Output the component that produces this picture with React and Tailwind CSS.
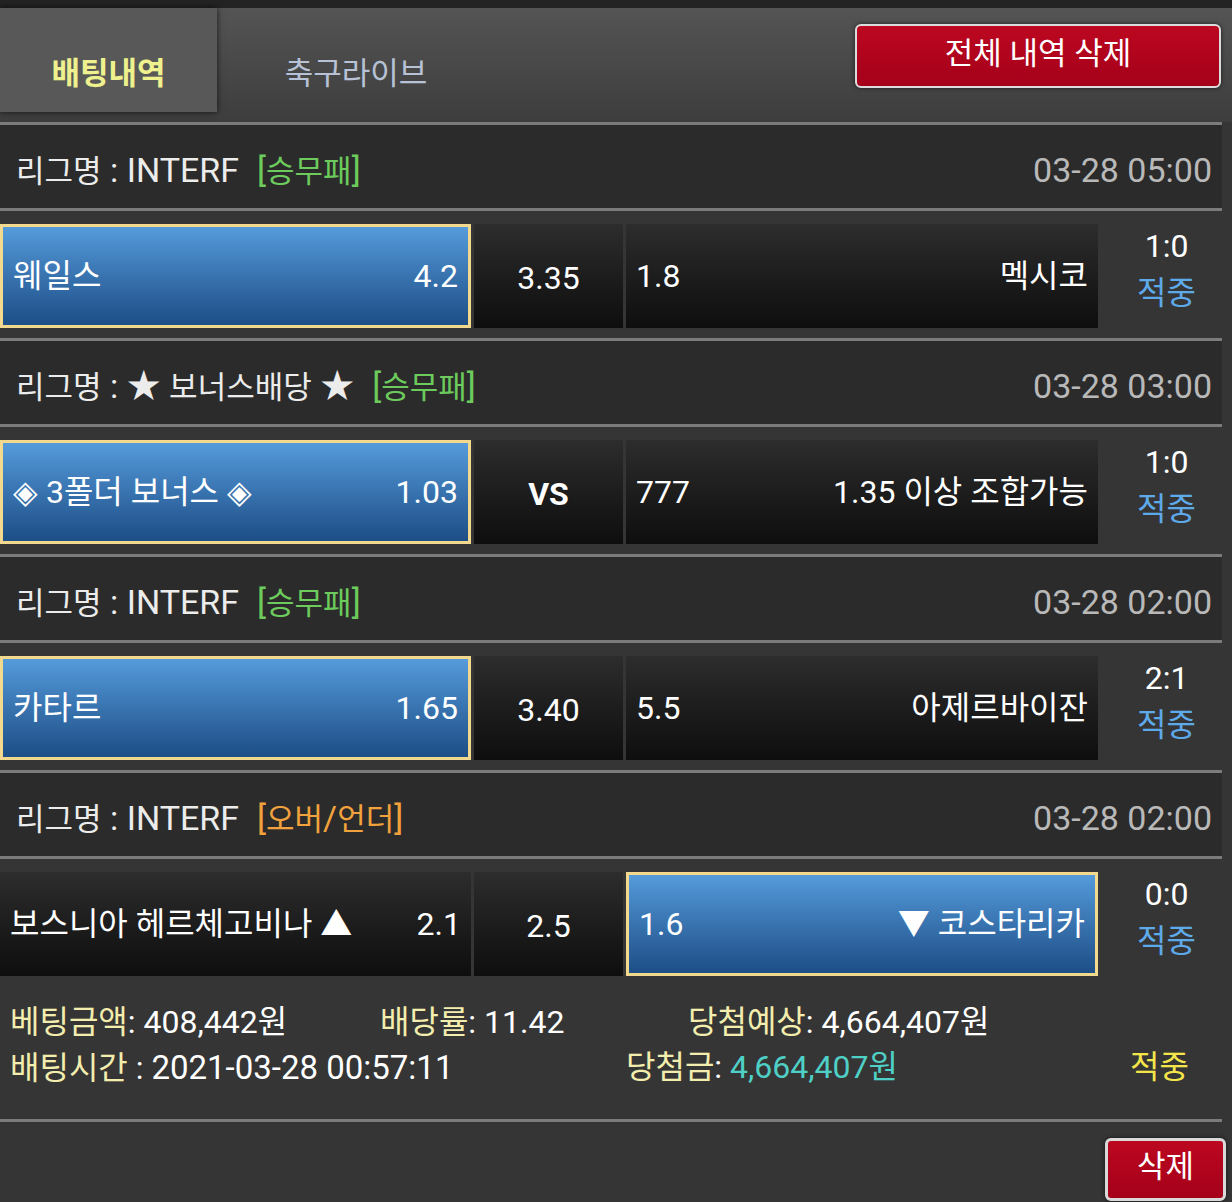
import React from "react";

// Betting history list: four settled picks plus the slip summary.
const ROWS = [
  {
    league: "리그명 : INTERF",
    tag: "[승무패]",
    tagColor: "text-[#6ccb5c]",
    time: "03-28 05:00",
    home: "웨일스",
    homeOdds: "4.2",
    draw: "3.35",
    awayOdds: "1.8",
    away: "멕시코",
    pick: "home",
    score: "1:0",
  },
  {
    league: "리그명 : ★ 보너스배당 ★",
    tag: "[승무패]",
    tagColor: "text-[#6ccb5c]",
    time: "03-28 03:00",
    home: "◈ 3폴더 보너스 ◈",
    homeOdds: "1.03",
    draw: "VS",
    awayOdds: "777",
    away: "1.35 이상 조합가능",
    pick: "home",
    score: "1:0",
  },
  {
    league: "리그명 : INTERF",
    tag: "[승무패]",
    tagColor: "text-[#6ccb5c]",
    time: "03-28 02:00",
    home: "카타르",
    homeOdds: "1.65",
    draw: "3.40",
    awayOdds: "5.5",
    away: "아제르바이잔",
    pick: "home",
    score: "2:1",
  },
  {
    league: "리그명 : INTERF",
    tag: "[오버/언더]",
    tagColor: "text-[#f2a23c]",
    time: "03-28 02:00",
    home: "보스니아 헤르체고비나 ▲",
    homeOdds: "2.1",
    draw: "2.5",
    awayOdds: "1.6",
    away: "▼ 코스타리카",
    pick: "away",
    score: "0:0",
  },
];

const FONT = { fontFamily: 'Roboto, "Noto Sans CJK KR", sans-serif' };

const blue = "bg-gradient-to-b from-[#559bdb] to-[#1d4e86] border-[3px] border-[#f3d98e]";
const dark = "bg-gradient-to-b from-[#2d2d2d] to-[#0e0e0e]";

function Mixed({ text }) {
  return text.split(/([\uAC00-\uD7A3]+)/).map((part, i) =>
    /[\uAC00-\uD7A3]/.test(part) ? (
      <span key={i} className="text-[31px]">{part}</span>
    ) : (
      part
    )
  );
}

function Sep() {
  return <div className="h-[3px] w-[1222px] bg-[#7b7b7b]" />;
}

function Block({ r }) {
  return (
    <>
      <Sep />
      <div className="flex h-[83px] w-[1222px] items-center justify-between bg-[#2b2b2b] pl-4 pr-[10px] pt-2 text-[34px]">
        <div className="text-[#ececec]">
          <Mixed text={r.league} />
          <span className={`ml-[18px] ${r.tagColor}`}>
            <Mixed text={r.tag} />
          </span>
        </div>
        <div className="text-[#b9b9b9]">{r.time}</div>
      </div>
      <Sep />
      <div className="flex h-[127px] gap-[3px] pt-[13px] pb-[10px]">
        <div className={`flex w-[471px] items-center justify-between px-[10px] ${r.pick === "home" ? blue : dark}`}>
          <span>{r.home}</span>
          <span>{r.homeOdds}</span>
        </div>
        <div className={`flex w-[149px] items-center justify-center pt-1 ${dark} ${r.draw === "VS" ? "font-bold" : ""}`}>
          {r.draw}
        </div>
        <div className={`flex w-[472px] items-center justify-between px-[10px] ${r.pick === "away" ? blue : dark}`}>
          <span>{r.awayOdds}</span>
          <span>{r.away}</span>
        </div>
        <div className="flex flex-1 flex-col items-center justify-center pb-3 leading-[47px]">
          <span>{r.score}</span>
          <span className="text-[#5ea9e8]">적중</span>
        </div>
      </div>
    </>
  );
}

export default function App() {
  return (
    <div className="min-h-[1202px] w-[1232px] bg-[#353535] text-[32px] leading-tight text-white" style={FONT}>
      <div className="h-2 bg-[#232323]" />
      <div className="flex h-[114px] items-start bg-gradient-to-b from-[#545454] to-[#3d3d3d]">
        <div className="flex h-[104px] w-[217px] items-end justify-center bg-[#585858] pb-[18px] text-[31px] font-bold text-[#eef18d] shadow-[0_0_6px_rgba(0,0,0,0.7)]">
          배팅내역
        </div>
        <div className="flex h-[104px] w-[278px] items-end justify-center pb-[18px] text-[31px] text-[#b7c2d6]">
          축구라이브
        </div>
        <div className="ml-auto mr-[11px] mt-4 flex h-[64px] w-[366px] items-center justify-center rounded-md border-2 border-[#dcdcdc] bg-gradient-to-b from-[#bc0820] to-[#a5001a] pb-1 text-[31px] shadow-[0_0_4px_rgba(0,0,0,0.6)]">
          전체 내역 삭제
        </div>
      </div>

      {ROWS.map((r, i) => (
        <Block key={i} r={r} />
      ))}

      <div className="pt-[14px] pb-[28px] pl-[10px] leading-[45px]">
        <div className="flex">
          <span className="w-[370px]">
            <span className="text-[#f3edae]">베팅금액</span>: 408,442원
          </span>
          <span className="w-[308px]">
            <span className="text-[#f3edae]">배당률</span>: 11.42
          </span>
          <span>
            <span className="text-[#f3edae]">당첨예상</span>: 4,664,407원
          </span>
        </div>
        <div className="flex">
          <span className="w-[616px]">
            <span className="text-[#f3edae]">배팅시간</span> : <span className="text-[33px]">2021-03-28 00:57:11</span>
          </span>
          <span className="w-[504px]">
            <span className="text-[#f3edae]">당첨금</span>: <span className="text-[#4fd0c6]">4,664,407원</span>
          </span>
          <span className="text-[#f4e64a]">적중</span>
        </div>
      </div>

      <Sep />
      <div className="flex justify-end pt-4 pr-[6px]">
        <div className="flex h-[63px] w-[121px] items-center justify-center rounded-md border-[3px] border-[#d9d9d9] bg-gradient-to-b from-[#bc0820] to-[#a5001a] pb-1 text-[31px] shadow-[0_0_4px_rgba(0,0,0,0.6)]">
          삭제
        </div>
      </div>
    </div>
  );
}
